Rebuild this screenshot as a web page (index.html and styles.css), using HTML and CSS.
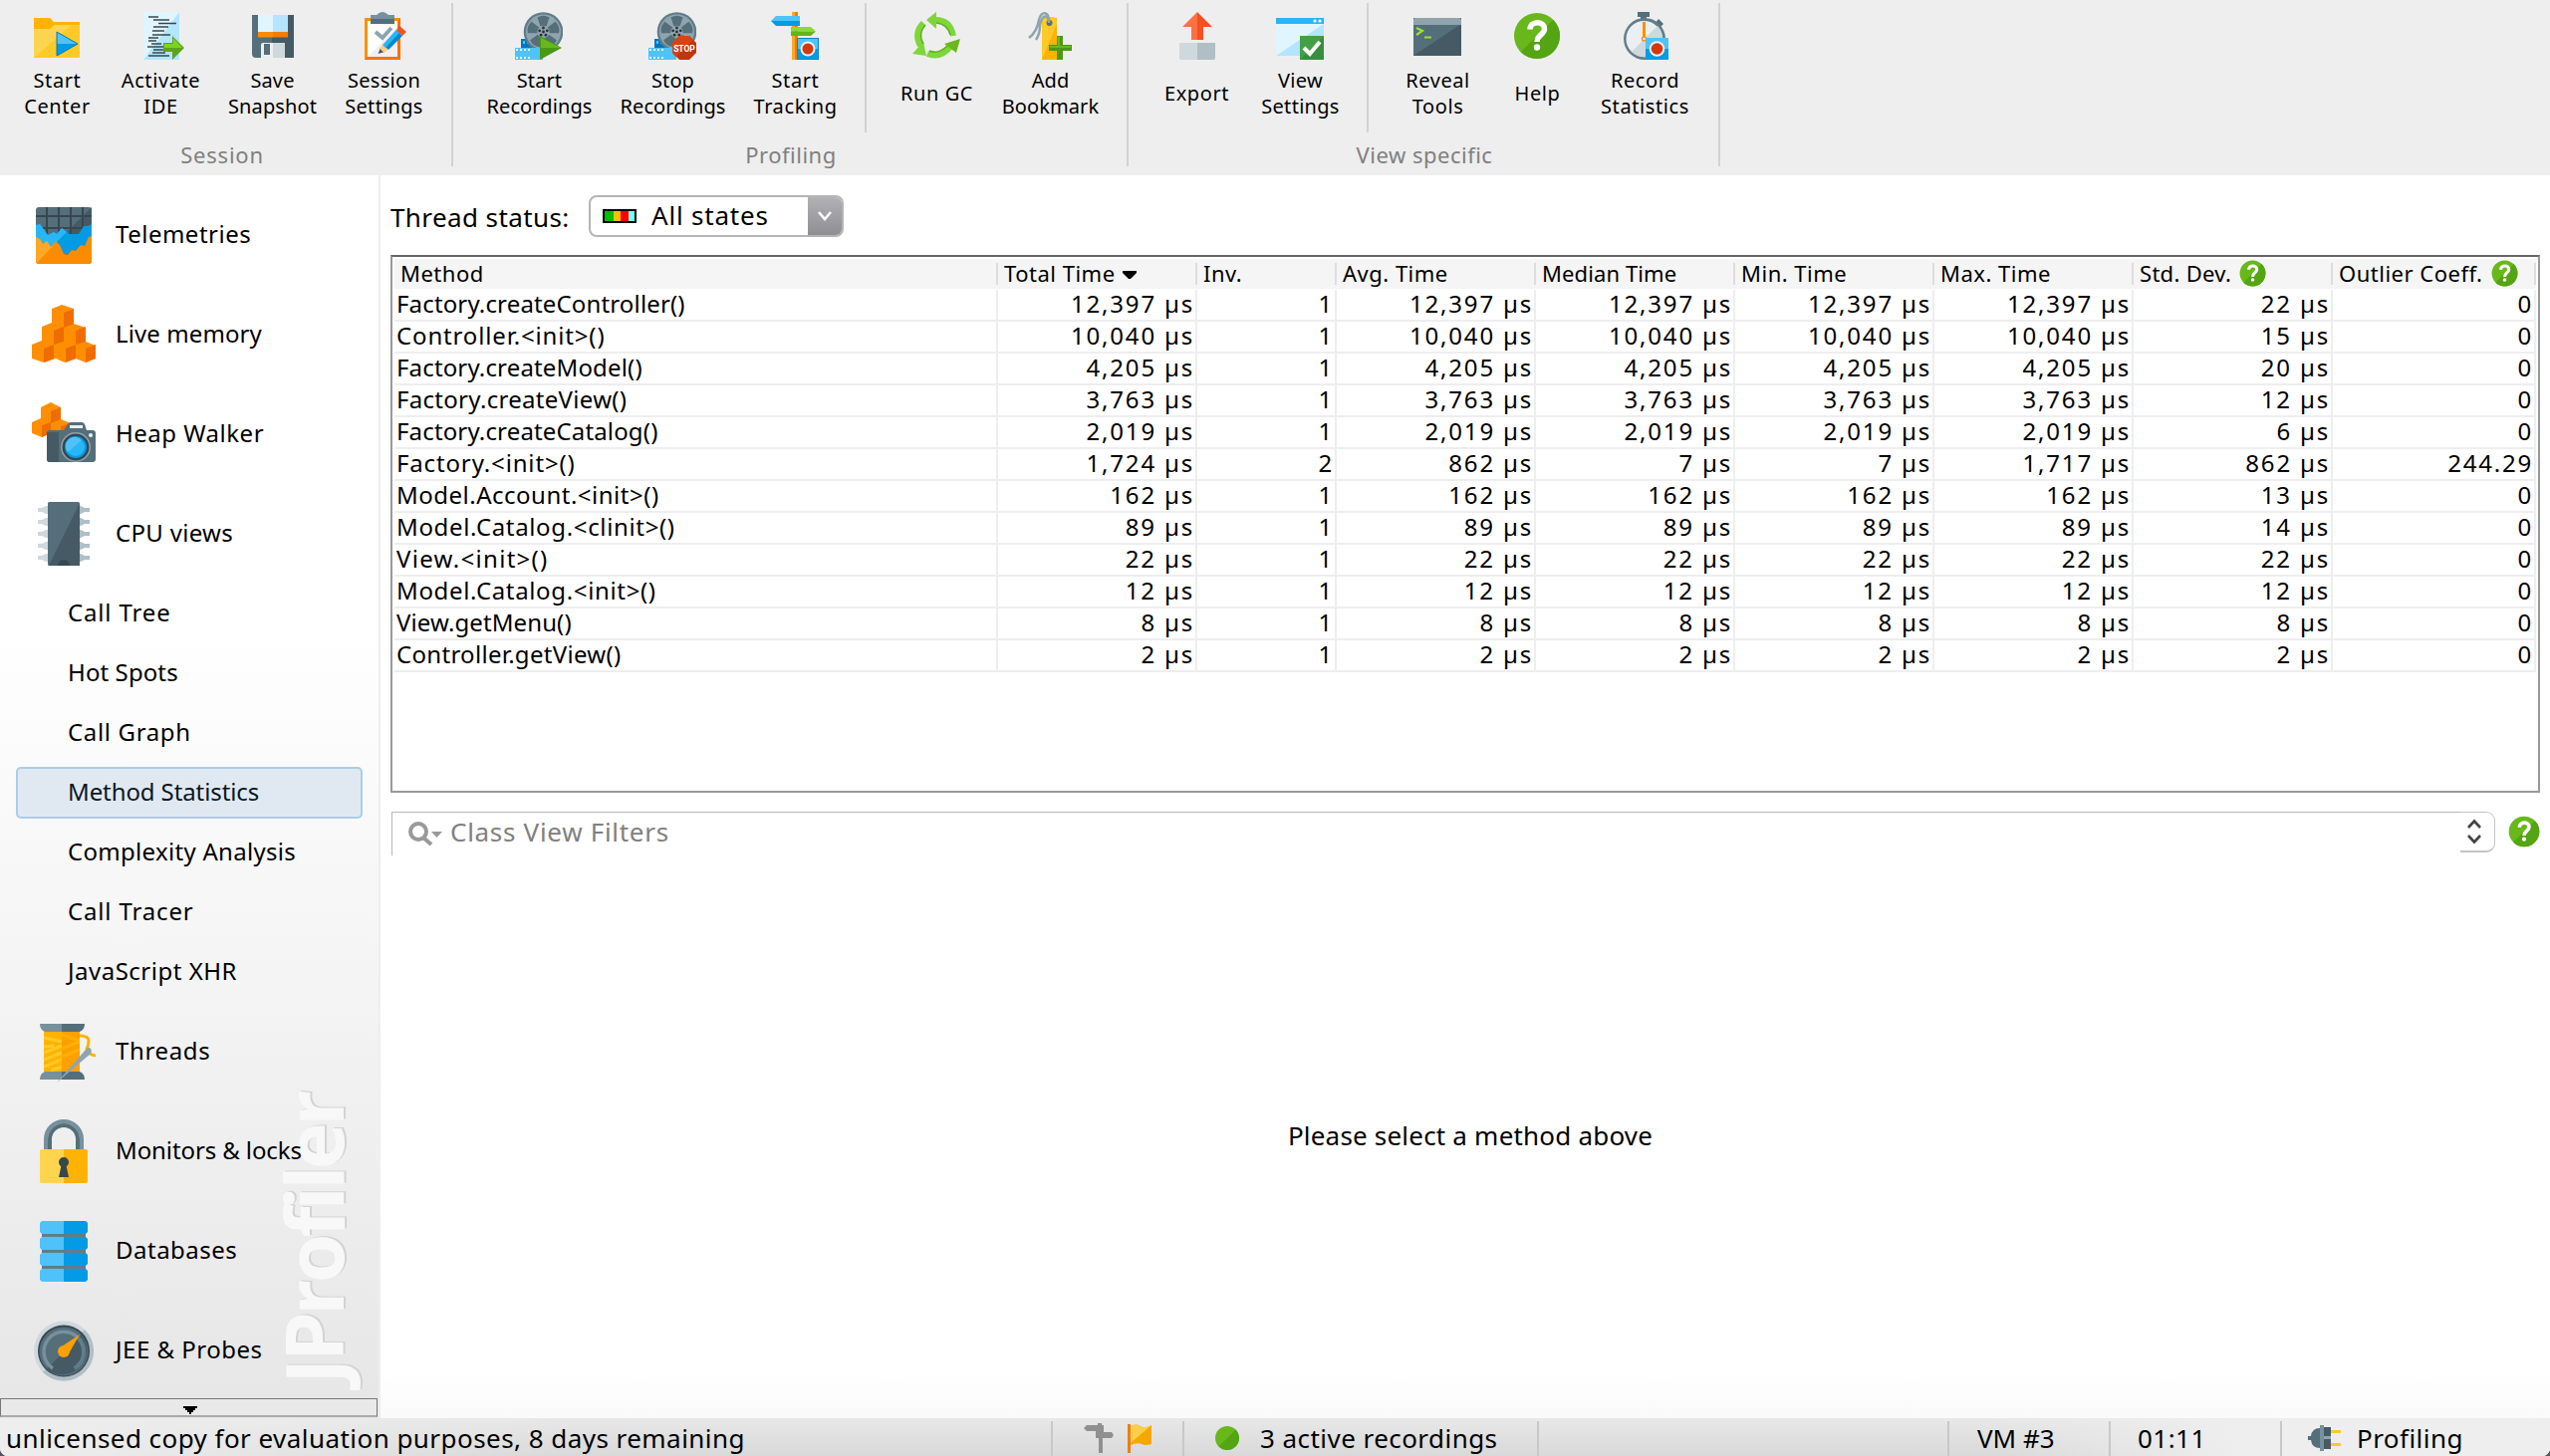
FILE: index.html
```html
<!DOCTYPE html>
<html lang="en">
<head>
<meta charset="utf-8">
<title>JProfiler</title>
<link rel="stylesheet" href="styles.css">
</head>
<body>
<svg class="defs" width="0" height="0">
  <symbol id="help" viewBox="0 0 48 48">
    <circle cx="24" cy="24" r="23" fill="#68b81b"/>
    <path d="M40.300 7.700A23 23 0 0 1 7.700 40.300z" fill="#54a414"/>
    <path d="M17 17.500c0-9 14.500-9 14.500-.5 0 6-7.500 6-7.500 13" fill="none" stroke="#fff" stroke-width="5.500"/>
    <circle cx="24" cy="35.500" r="3.200" fill="#fff"/>
  </symbol>
  <symbol id="reel" viewBox="0 0 48 48">
    <path d="M6 27h18v14H6z" fill="#0277bd"/>
    <path d="M8 29h2v3H8zM12 29h2v3h-2z" fill="#4fc3f7"/>
    <circle cx="28.500" cy="20" r="19.800" fill="#607d8b"/>
    <circle cx="28.500" cy="20" r="17.500" fill="#90a4ae"/>
    <g fill="#546e7a">
      <path id="lobe" d="M22.500 5.500q6-3.500 12 0l-3 9q-3-1.500-6 0z"/>
      <use href="#lobe" transform="rotate(72 28.500 20)"/>
      <use href="#lobe" transform="rotate(144 28.500 20)"/>
      <use href="#lobe" transform="rotate(216 28.500 20)"/>
      <use href="#lobe" transform="rotate(288 28.500 20)"/>
    </g>
    <g fill="#263238"><circle cx="28.500" cy="20" r="1.400"/><circle cx="28.500" cy="16" r="1.400"/><circle cx="32.300" cy="18.800" r="1.400"/><circle cx="30.900" cy="23.200" r="1.400"/><circle cx="26.100" cy="23.200" r="1.400"/><circle cx="24.700" cy="18.800" r="1.400"/></g>
    <path d="M0 36h28v12H0z" fill="#4fc3f7"/>
    <path d="M1 38h15M1 46h15" stroke="#e1f5fe" stroke-width="2" stroke-dasharray="2 2"/>
  </symbol>
</svg>
<div class="app">
  <header class="toolbar">
    <section class="group session">
      <div class="buttons">
        <div class="btn w100"><svg viewBox="0 0 48 48"><path d="M1 6h16l4 4h26v36H1z" fill="#ffb300"/><path d="M1 17h16l5-4h25v33H1z" fill="#ffca28"/><path d="M1 17h16l5-4h17L1 46z" fill="#ffd54f"/><path d="M24 20v12h21z" fill="#4fc3f7"/><path d="M24 32h21L24 44z" fill="#039be5"/><path d="M24 20v24l21-12z" fill="none" stroke="#0277bd" stroke-width="1"/></svg><span>Start<br>Center</span></div>
        <div class="btn w108"><svg viewBox="0 0 48 48"><path d="M7 0h36v48H7z" fill="#b3e5fc"/><path d="M7 0h36L7 48z" fill="#e1f5fe"/><path d="M12 5h10M17 8h16M22 11.500h18M17 15h15M16 19h12M16 23h18M12 26h10M12 29h8M15 32h10M11 35h16M17 38h12M16 41h13M12 44h21" stroke="#37474f" stroke-width="1.500"/><path d="M27 31h9v-7l12 12-12 12v-8h-9z" fill="#5fa31c"/><path d="M28 32h9v-6l9 10H28z" fill="#7ed321"/></svg><span>Activate<br>IDE</span></div>
        <div class="btn w116"><svg viewBox="0 0 48 48"><path d="M4 3h20v43H8q-4 0-4-4z" fill="#546e7a"/><path d="M24 3h22v43H24z" fill="#455a64"/><path d="M10 3h15v17H10z" fill="#e1f5fe"/><path d="M25 3h15v17H25z" fill="#b3e5fc"/><path d="M10 20h15v5.500H10z" fill="#fb8c00"/><path d="M25 20h15v5.500H25z" fill="#f57c00"/><path d="M13 46V33q0-2 2-2h10v15z" fill="#eceff1"/><path d="M25 31h12v15H25z" fill="#cfd8dc"/><path d="M16 32h6v11h-6z" fill="#546e7a"/></svg><span class="t1">Save<br>Snapshot</span></div>
        <div class="btn w108"><svg viewBox="0 0 48 48"><path d="M5 6h36v42H5z" fill="#ff8f00"/><path d="M41 6v42H5z" fill="#ff6f00"/><path d="M8 9h30v36H8z" fill="#fff"/><path d="M8 45L38 15v30z" fill="#f0f0f0"/><path d="M11 3h6q6-6 12 0h6v9H11z" fill="#78909c"/><path d="M11 7h24v5H11z" fill="#546e7a"/><path d="M16 20l7 6 9-10" fill="none" stroke="#90a4ae" stroke-width="4"/><path d="M21 36l-2.500 6 7-2z" fill="#455a64"/><path d="M23 32l6 6-5 2.500-3.500-3.500z" fill="#ffcc80"/><path d="M23.500 33L37 18l6 6-14 14z" fill="#0288d1"/><path d="M23.500 33L37 18l3 3-14 15z" fill="#29b6f6"/><path d="M37 18l3-4 7 6-4 4z" fill="#f4511e"/></svg><span class="t3">Session<br>Settings</span></div>
      </div>
      <h2>Session</h2>
    </section>
    <section class="group profiling">
      <div class="buttons">
        <div class="btn w134"><svg viewBox="0 0 48 48"><use href="#reel"/><path d="M25 24v24l22-12z" fill="#4a9914"/><path d="M26 26v10h20z" fill="#68b81b"/></svg><span class="t1">Start<br>Recordings</span></div>
        <div class="btn w134"><svg viewBox="0 0 48 48"><use href="#reel"/><path d="M31 24h10l7 7v10l-7 7H31l-7-7V31z" fill="#bf360c"/><path d="M31 24h10l4 4-18 17-3-4V31z" fill="#d84315"/><text x="36" y="39.500" class="stop">STOP</text></svg><span class="t1">Stop<br>Recordings</span></div>
        <div class="btn w112"><svg viewBox="0 0 48 48"><path d="M21 0h3v48h-3z" fill="#ffa726"/><path d="M24 0h3v48h-3z" fill="#f57c00"/><path d="M0 9l5-5h24v5z" fill="#4fc3f7"/><path d="M0 9h29v5H5z" fill="#039be5"/><path d="M20 15h20l5 4.500H20z" fill="#8bd932"/><path d="M20 19.500h25L40 24H20z" fill="#64b41b"/><path d="M26 26h22v22H26z" fill="#0288d1"/><path d="M27 27h20v10H27z" fill="#4fc3f7"/><path d="M27 37h20v10H27z" fill="#039be5"/><circle cx="37" cy="37" r="7.500" fill="#eceff1"/><circle cx="37" cy="37" r="5.500" fill="#d3380d"/></svg><span>Start<br>Tracking</span></div>
        <div class="rule"></div>
        <div class="btn w110"><svg viewBox="0 0 48 48"><g fill="none" stroke="#7ed63a" stroke-width="6"><path d="M23 8Q38 8 41 24"/><path d="M38 35Q28 47 15 42"/><path d="M8 34Q1 21 11 11"/></g><path d="M24 0v17l-10-9z" fill="#7ed63a"/><path d="M48 27l-4 14-12-9z" fill="#68b81b"/><path d="M0 42l14 2-3-14z" fill="#7ed63a"/><path d="M24 11q11 1 14 12M35 34q-9 9-18 5M11 32Q5 22 13 13" fill="none" stroke="#5dad18" stroke-width="1.500"/></svg><span>Run GC</span></div>
        <div class="btn w118"><svg viewBox="0 0 48 48"><path d="M16 6h15v42H16z" fill="#ffb300"/><path d="M16 9q1-4 4-4h7q3 0 4 4v3L16 48z" fill="#ffca28"/><circle cx="23.500" cy="11" r="3" fill="#546e7a"/><path d="M23 11C24-1 15-2 13 8q-2 12-10 18M23 10C22 2 16 2 14 14q0 8-4 14" fill="none" stroke="#90a4ae" stroke-width="2.500"/><path d="M31 24h6v9h9v6h-9v9h-6v-9h-8v-6h8z" fill="#4a9914"/><path d="M32 25h2v9h11v2H24v-2h8z" fill="#68b81b"/></svg><span class="t1">Add<br>Bookmark</span></div>
      </div>
      <h2>Profiling</h2>
    </section>
    <section class="group view">
      <div class="buttons">
        <div class="btn w102"><svg viewBox="0 0 48 48"><path d="M25 0v28h-6V15h-9z" fill="#ff7043"/><path d="M25 0v28h6V15h9z" fill="#f4511e"/><path d="M7 31h18v17H9q-2 0-2-2z" fill="#cfd8dc"/><path d="M25 31h18v15q0 2-2 2H25z" fill="#b0bec5"/></svg><span>Export</span></div>
        <div class="btn w106"><svg viewBox="0 0 48 48"><path d="M0 6h48v38H0z" fill="#b3e5fc"/><path d="M0 12h48L0 44z" fill="#e1f5fe"/><path d="M0 6h48v6H0z" fill="#29b6f6"/><circle cx="39" cy="9" r="1.600" fill="#fff"/><circle cx="44" cy="9" r="1.600" fill="#fff"/><path d="M24 24h24v24H24z" fill="#43a047"/><path d="M48 24v24H24z" fill="#388e3c"/><path d="M28 36l6 6 10-12" fill="none" stroke="#fff" stroke-width="4"/></svg><span class="t3">View<br>Settings</span></div>
        <div class="rule"></div>
        <div class="btn w108"><svg viewBox="0 0 48 48"><path d="M0 6h48v38H0z" fill="#455a64"/><path d="M0 12h48L0 44z" fill="#546e7a"/><path d="M2 6h44q2 0 2 2v5H0V8q0-2 2-2z" fill="#90a4ae"/><path d="M3 16l6 3-6 4M11 25.500h7" fill="none" stroke="#9be22d" stroke-width="2.200"/></svg><span>Reveal<br>Tools</span></div>
        <div class="btn w92"><svg viewBox="0 0 48 48"><use href="#help"/></svg><span>Help</span></div>
        <div class="btn w124"><svg viewBox="0 0 48 48"><path d="M17 0h12v5h-3v3h-6V5h-3z" fill="#546e7a"/><path d="M35 11l3-4 5 5-4 4z" fill="#546e7a"/><circle cx="24" cy="27" r="21" fill="#607d8b"/><circle cx="23.500" cy="27" r="18" fill="#eceff1"/><path d="M37 14A18 18 0 0 1 11 40z" fill="#cfd8dc"/><path d="M23.500 10v15" stroke="#ff8f00" stroke-width="3"/><circle cx="23.500" cy="27" r="2" fill="#fff" stroke="#ff8f00" stroke-width="1.500"/><path d="M25 26h23v22H25z" fill="#039be5"/><path d="M25 26h23v11H25z" fill="#4fc3f7"/><circle cx="36.500" cy="37" r="7.800" fill="#eceff1"/><circle cx="36.500" cy="37" r="5.800" fill="#d3380d"/></svg><span>Record<br>Statistics</span></div>
      </div>
      <h2>View specific</h2>
    </section>
  </header>
  <div class="body">
    <nav class="sidebar">
      <div class="watermark">JProfiler</div>
      <div class="item"><svg viewBox="0 0 64 64"><rect x="4" y="4" width="56" height="57" rx="3" fill="#546e7a"/><path d="M60 4v40H20z" fill="#455a64"/><path d="M15 4v28M27 4v28M39 4v28M51 4v28M4 13h56M4 25h56" stroke="#37474f" stroke-width="2"/><path d="M4 22l4-1 8 11 6-3 3 2 5-6 8 6h9l5-8h4l4-2v30H4z" fill="#039be5"/><path d="M4 22l4-1 8 11 6-3 3 2 5-6 5 4-18 18H4z" fill="#29b6f6"/><path d="M4 34l4 2 3 5 4-3 4 6 5-6 4 4 4 9 4 1 4-5 4 1 5-6 4 1 4-9 3-1v25q0 3-3 3H7q-3 0-3-3z" fill="#fb8c00"/><path d="M4 34l4 2 3 5 4-3 4 6 3-2L5 60l-1-2z" fill="#ffa726"/></svg><span>Telemetries</span></div>
      <div class="item"><svg viewBox="0 0 64 64"><path d="M30 2l12 4v15l12 4v14l10 4v13l-10 4-10-4-11 4-9-4-12 4-12-4V42l10-4V24l10-4V6z" fill="#ff8f00"/><path d="M42 6v15l-10 4V10zM32 24v15l-10 3V28zM54 24v15l-10 3V28zM22 42v14l-10 4V46zM44 42v14l-10 4V46zM64 42v14l-10 4V46z" fill="#ef6c00"/></svg><span class="t1">Live memory</span></div>
      <div class="item"><svg viewBox="0 0 64 64"><path d="M19 0l10 5v12l10 4v10H19l-9 4-10-4V20l9-4V5z" fill="#ff8f00"/><path d="M29 5v12l-10 4V9zM19 20v11l-9 4V23zM38 21l-9 3v7h9z" fill="#ef6c00"/><path d="M15 31q0-3 3-3h14l4-6q1-2 3-2h11q2 0 3 2l2 6h6q3 0 3 3v26q0 3-3 3H18q-3 0-3-3z" fill="#546e7a"/><path d="M15 30h12v30h-9q-3 0-3-3z" fill="#455a64"/><path d="M38 23h13v3H38z" fill="#eceff1"/><circle cx="44" cy="45" r="15" fill="#90a4ae"/><circle cx="44" cy="45" r="13.500" fill="#37474f"/><circle cx="44" cy="45" r="11" fill="#039be5"/><circle cx="44" cy="45" r="9" fill="#29b6f6"/><path d="M36 50a9 9 0 0 1 14-12z" fill="#4fc3f7"/><circle cx="59" cy="33" r="2" fill="#eceff1"/></svg><span>Heap Walker</span></div>
      <div class="item"><svg viewBox="0 0 64 64"><path id="pinl" d="M6 6h4l4-2h3v8h-3l-4-2H6z" fill="#cfd8dc"/><use href="#pinl" y="12"/><use href="#pinl" y="24"/><use href="#pinl" y="36"/><use href="#pinl" y="48"/><path id="pinr" d="M58 6h-5l-4-2h-3v8h3l4-2h5z" fill="#b0bec5"/><use href="#pinr" y="12"/><use href="#pinr" y="24"/><use href="#pinr" y="36"/><use href="#pinr" y="48"/><rect x="16" width="32" height="64" rx="1.500" fill="#546e7a"/><path d="M48 1v63H17z" fill="#455a64"/><path d="M26 64a6 6 0 0 1 12 0z" fill="#37474f"/></svg><span class="t3">CPU views</span></div>
      <div class="sub"><span class="t9">Call Tree</span></div>
      <div class="sub"><span class="t1">Hot Spots</span></div>
      <div class="sub"><span class="t6">Call Graph</span></div>
      <div class="sub selected"><span class="t0">Method Statistics</span></div>
      <div class="sub"><span class="t3">Complexity Analysis</span></div>
      <div class="sub"><span class="t9">Call Tracer</span></div>
      <div class="sub"><span class="t5">JavaScript XHR</span></div>
      <div class="item"><svg viewBox="0 0 64 64"><path d="M12 12h18v40H12z" fill="#ffb300"/><path d="M30 12h18v40H30z" fill="#ffa000"/><path d="M12 18l18 4M12 27l10-1M12 33l18-7M12 40l18-7M12 47l18-7M19 51l11-4" stroke="#ffca28" stroke-width="3"/><path d="M30 15l18 6M30 29l18-7M30 37l18-7" stroke="#ffb300" stroke-width="2.500"/><path d="M8 4h22v8H13q-5-2-5-8zM8 60h22v-8H13q-5 2-5 8z" fill="#78909c"/><path d="M30 4h23q0 6-5 8H30zM30 60h23q0-6-5-8H30z" fill="#546e7a"/><path d="M48 16q9 0 9 5t-2 8q1 6 9 7" fill="none" stroke="#ffb300" stroke-width="3"/><path d="M58 28q3 2 1 6L25 63l29-33q2-3 4-2z" fill="#90a4ae"/></svg><span class="t6">Threads</span></div>
      <div class="item"><svg viewBox="0 0 64 64"><path d="M14 32V20a18 18 0 0 1 36 0v12" fill="none" stroke="#78909c" stroke-width="4"/><path d="M18 32V20a14 14 0 0 1 28 0v12" fill="none" stroke="#546e7a" stroke-width="4"/><path d="M8 32q0-2 2-2h22v34H10q-2 0-2-2z" fill="#ffd54f"/><path d="M32 30h22q2 0 2 2v30q0 2-2 2H32z" fill="#ffb300"/><circle cx="32" cy="43" r="5" fill="#37474f"/><path d="M30 44h4l3 14H27z" fill="#37474f"/></svg><span class="t0">Monitors &amp; locks</span></div>
      <div class="item"><svg viewBox="0 0 64 64"><path d="M10 14h44v36H10z" fill="#607d8b"/><g fill="#4fc3f7"><path id="dbl" d="M32 2H10l-2 2v9l2 2h22z"/><use href="#dbl" y="16"/><use href="#dbl" y="32"/><use href="#dbl" y="48"/></g><g fill="#039be5"><path id="dbr" d="M32 2h22l2 2v9l-2 2H32z"/><use href="#dbr" y="16"/><use href="#dbr" y="32"/><use href="#dbr" y="48"/></g></svg><span>Databases</span></div>
      <div class="item"><svg viewBox="0 0 64 64"><circle cx="32" cy="32.500" r="30" fill="#cfd8dc"/><path d="M53 11A30 30 0 0 1 11 54z" fill="#b0bec5"/><circle cx="32" cy="32.500" r="26" fill="#37474f"/><circle cx="32" cy="33" r="24.500" fill="#546e7a"/><path d="M49.500 16A24.500 24.500 0 0 1 15 50.500z" fill="#455a64"/><path d="M21 50a20 20 0 1 1 22 0" fill="none" stroke="#78909c" stroke-width="3.500"/><path d="M46 18.500A20 20 0 0 1 43 50" fill="none" stroke="#607d8b" stroke-width="3.500"/><circle cx="32" cy="33" r="6" fill="#ffa000"/><path d="M27 30l21-14-12 21z" fill="#ffa000"/></svg><span>JEE &amp; Probes</span></div>
      <div class="scroller"><svg viewBox="0 0 14 8" width="14" height="8"><path d="M0 0h14v2h-2v2h-2v2H8v2H6V6H4V4H2V2H0z"/></svg></div>
    </nav>
    <main class="main">
      <div class="status-row">
        <label>Thread status:</label>
        <div class="combo">
          <span class="states"><i class="run"></i><i class="wait"></i><i class="block"></i><i class="io"></i></span>
          <span class="value">All states</span>
          <span class="arrow"><svg viewBox="0 0 16 12" width="16" height="12"><path d="M2 2l6 7 6-7" fill="none" stroke="#fff" stroke-width="2.500"/></svg></span>
        </div>
      </div>
      <div class="table">
        <div class="row head"><b>Method</b><b>Total Time<svg class="sort" viewBox="0 0 14 8"><path d="M0 0h14v2L8 8H6L0 2z"/></svg></b><b>Inv.</b><b>Avg. Time</b><b class="t1">Median Time</b><b>Min. Time</b><b>Max. Time</b><b class="t3">Std. Dev.<svg class="q"><use href="#help"/></svg></b><b>Outlier Coeff.<svg class="q"><use href="#help"/></svg></b></div>
        <div class="row"><span>Factory.createController()</span><i>12,397 µs</i><i>1</i><i>12,397 µs</i><i>12,397 µs</i><i>12,397 µs</i><i>12,397 µs</i><i>22 µs</i><i>0</i></div>
        <div class="row"><span class="t9">Controller.&lt;init&gt;()</span><i>10,040 µs</i><i>1</i><i>10,040 µs</i><i>10,040 µs</i><i>10,040 µs</i><i>10,040 µs</i><i>15 µs</i><i>0</i></div>
        <div class="row"><span>Factory.createModel()</span><i>4,205 µs</i><i>1</i><i>4,205 µs</i><i>4,205 µs</i><i>4,205 µs</i><i>4,205 µs</i><i>20 µs</i><i>0</i></div>
        <div class="row"><span class="t3">Factory.createView()</span><i>3,763 µs</i><i>1</i><i>3,763 µs</i><i>3,763 µs</i><i>3,763 µs</i><i>3,763 µs</i><i>12 µs</i><i>0</i></div>
        <div class="row"><span>Factory.createCatalog()</span><i>2,019 µs</i><i>1</i><i>2,019 µs</i><i>2,019 µs</i><i>2,019 µs</i><i>2,019 µs</i><i>6 µs</i><i>0</i></div>
        <div class="row"><span class="t9">Factory.&lt;init&gt;()</span><i>1,724 µs</i><i>2</i><i>862 µs</i><i>7 µs</i><i>7 µs</i><i>1,717 µs</i><i>862 µs</i><i>244.29</i></div>
        <div class="row"><span class="t5">Model.Account.&lt;init&gt;()</span><i>162 µs</i><i>1</i><i>162 µs</i><i>162 µs</i><i>162 µs</i><i>162 µs</i><i>13 µs</i><i>0</i></div>
        <div class="row"><span class="t6">Model.Catalog.&lt;clinit&gt;()</span><i>89 µs</i><i>1</i><i>89 µs</i><i>89 µs</i><i>89 µs</i><i>89 µs</i><i>14 µs</i><i>0</i></div>
        <div class="row"><span class="t12">View.&lt;init&gt;()</span><i>22 µs</i><i>1</i><i>22 µs</i><i>22 µs</i><i>22 µs</i><i>22 µs</i><i>22 µs</i><i>0</i></div>
        <div class="row"><span class="t6">Model.Catalog.&lt;init&gt;()</span><i>12 µs</i><i>1</i><i>12 µs</i><i>12 µs</i><i>12 µs</i><i>12 µs</i><i>12 µs</i><i>0</i></div>
        <div class="row"><span class="t1">View.getMenu()</span><i>8 µs</i><i>1</i><i>8 µs</i><i>8 µs</i><i>8 µs</i><i>8 µs</i><i>8 µs</i><i>0</i></div>
        <div class="row"><span class="t3">Controller.getView()</span><i>2 µs</i><i>1</i><i>2 µs</i><i>2 µs</i><i>2 µs</i><i>2 µs</i><i>2 µs</i><i>0</i></div>
      </div>
      <div class="filter-row">
        <div class="filter">
          <svg viewBox="0 0 34 26" width="34" height="26"><circle cx="10" cy="10" r="8" fill="none" stroke="#999" stroke-width="4"/><path d="M15 16l8 7" stroke="#999" stroke-width="4"/><path d="M23 10h11l-5.500 6z" fill="#999"/></svg>
          <span>Class View Filters</span>
        </div>
        <div class="stepper"><svg viewBox="0 0 14 26" width="14" height="26"><path d="M1 9l6-6.500L13 9M1 17l6 6.500 6-6.500" fill="none" stroke="#444" stroke-width="2.600"/></svg></div>
        <svg class="help"><use href="#help"/></svg>
      </div>
      <div class="placeholder">Please select a method above</div>
    </main>
  </div>
  <footer class="statusbar">
    <div class="cell license">unlicensed copy for evaluation purposes, 8 days remaining</div>
    <div class="cell flags"><svg viewBox="0 0 30 30" width="30" height="30"><path d="M0 5l3-3h11V0h4v2h2v7h8l2 3-2 3h-9v15h-4V15h-3V8H3z" fill="#909090"/></svg><svg viewBox="0 0 24 30" width="24" height="30"><path d="M3 3q6-3 10 0t11-1v19q-6 2-10 0t-11 1z" fill="#f7a800"/><path d="M3 3q6-3 10 0t11-1L3 20z" fill="#f9ce4a"/><path d="M0 1h3v29H0z" fill="#ef7d10"/></svg></div>
    <div class="cell rec"><svg viewBox="0 0 24 24" width="24" height="24"><circle cx="12" cy="12" r="12" fill="#68b81b"/><path d="M20.500 3.500a12 12 0 0 1-17 17z" fill="#54a414"/></svg><span>3 active recordings</span></div>
    <div class="cell grow"></div>
    <div class="cell vm">VM #3</div>
    <div class="cell time">01:11</div>
    <div class="cell mode"><svg viewBox="0 0 33 26" width="33" height="26"><path d="M0 11h3Q4 3 12 3v20Q4 23 3 15H0z" fill="#546e7a"/><path d="M12 0h4v26h-4z" fill="#78909c"/><path d="M16 2h7v22h-7z" fill="#455a64"/><path d="M16 11h7v3h-7z" fill="#90a4ae"/><path d="M23 5h10v3H23zM23 18h10v3H23z" fill="#ffca28"/></svg><span>Profiling</span></div>
  </footer>
</div>
</body>
</html>
```
FILE: styles.css
```css
* { box-sizing: border-box; }
body { margin: 0; background: #555; font-family: "Noto Sans", "Open Sans", sans-serif; color: #000; }
.defs { position: absolute; }
.app { width: 2560px; height: 1462px; display: flex; flex-direction: column; background: #fff; border-radius: 0 0 8px 8px; overflow: hidden; white-space: nowrap; }

/* Toolbar */
.toolbar { height: 176px; background: #eee; display: flex; flex: none; }
.group { height: 164px; margin-top: 3px; border-right: 2px solid #d2d2d2; padding-top: 9px; }
.session { width: 455px; padding-left: 7px; }
.profiling { width: 678px; padding-left: 19px; }
.view { width: 594px; padding-left: 17px; }
.buttons { display: flex; height: 121px; }
.btn { display: flex; flex-direction: column; align-items: center; font-size: 20px; line-height: 26px; letter-spacing: .6px; text-align: center; }
.btn svg { width: 48px; height: 48px; flex: none; overflow: visible; }
.btn span { height: 52px; margin: 8px 0 0 1px; display: flex; align-items: center; }
.stop { font: bold 8.500px "Roboto", sans-serif; letter-spacing: 0; text-anchor: middle; fill: #fff; }
.w92 { width: 92px; } .w100 { width: 100px; } .w102 { width: 102px; } .w106 { width: 106px; } .w108 { width: 108px; }
.w110 { width: 110px; } .w112 { width: 112px; } .w116 { width: 116px; } .w118 { width: 118px; } .w124 { width: 124px; } .w134 { width: 134px; }
.rule { width: 2px; background: #d2d2d2; margin: -9px 15px 0 14px; }
.group h2 { margin: 8px 0 0; font-size: 22px; line-height: 28px; font-weight: 400; letter-spacing: .5px; color: #808080; text-align: center; }
.session h2 { padding-right: 14px; letter-spacing: .8px; }
.profiling h2 { padding-right: 17px; }
.view h2 { padding-right: 15px; }

/* Body */
.body { flex: 1; display: flex; min-height: 0; }
.sidebar { position: relative; width: 382px; height: 1248px; border-right: 2px solid #eee; padding-top: 10px; background: linear-gradient(#fff 36%, #f4f4f4 65%, #e6e6e6 100%); overflow: hidden; }
.item { position: relative; height: 100px; padding-left: 32px; display: flex; align-items: center; gap: 20px; font-size: 24px; letter-spacing: .5px; }
.item svg { width: 64px; height: 64px; flex: none; }
.item span, .sub span { padding-bottom: 3px; }
.sub { position: relative; height: 60px; padding-left: 68px; display: flex; align-items: center; font-size: 24px; }
.selected { height: 52px; margin: 4px 16px; padding-left: 50px; border: 2px solid #abcde6; border-radius: 5px; background: #e0e9f2; color: #0c161f; }
.watermark { position: absolute; left: 264px; top: 908px; width: 100px; height: 306px; writing-mode: vertical-rl; transform: rotate(180deg); font: bold 80px/100px "Open Sans", sans-serif; letter-spacing: -3.800px; color: #f8f8f8; text-shadow: 1px 2px 0 #d3d3d3; }
.scroller { position: absolute; left: 0; top: 1228px; width: 379px; height: 19px; border: 1px solid #777; border-bottom: 2px solid #aaa; background: #e9e9e9; display: flex; align-items: center; justify-content: center; padding: 5px 0 0 3px; }

/* Main panel */
.main { flex: 1; padding-left: 10px; display: flex; flex-direction: column; background: linear-gradient(#fff 96%, #fafafa); }
.status-row { display: flex; margin-top: 20px; height: 60px; }
.status-row label { font-size: 26px; line-height: 44px; width: 199px; letter-spacing: .4px; }
.combo { width: 256px; height: 42px; border: 2px solid #b5b5b5; border-radius: 8px; display: flex; align-items: center; overflow: hidden; padding-left: 12px; }
.states { display: flex; width: 34px; height: 14px; border: 2px solid #000; }
.states i { width: 8px; } .run { background: #00c000; } .wait { background: #ffc000; } .block { background: red; } .states .io { width: 6px; background: #7ff; }
.states .run { width: 9px; }
.value { margin-left: 15px; flex: 1; padding-bottom: 2px; font-size: 26px; letter-spacing: .8px; }
.arrow { width: 34px; height: 42px; background: linear-gradient(#b4b3b7, #8d8c90); display: flex; align-items: center; justify-content: center; }
.table { width: 2158px; height: 540px; border: 2px solid #999; border-top-color: #666; padding: 2px; }
.row { display: grid; grid-template-columns: 606px 200px 140px repeat(5, 200px) 204px; height: 32px; border-bottom: 2px solid #eee; }
.row > * { font-style: normal; font-weight: 400; font-size: 24px; line-height: 28px; border-right: 2px solid #eee; height: 30px; }
.row span { padding-left: 2px; letter-spacing: .15px; }
.row i { text-align: right; padding-right: 1px; letter-spacing: 1.800px; }
.row.head { height: 31px; border-bottom: 1px solid #fff; background: #f5f5f5; padding: 4px 0; }
.head b { font-size: 22px; line-height: 20px; height: 22px; padding: 0 0 2px 6px; letter-spacing: .5px; display: flex; align-items: center; border-color: #ddd; }
.head .sort { width: 14px; height: 8px; margin-left: 7px; margin-top: 3px; }
.head .q { width: 27px; height: 27px; margin-left: 8px; }
.filter-row { display: flex; height: 44px; margin: 19px 10px 0 1px; }
.filter { width: 2077px; border: solid #b8b8b8; border-width: 1px 0 0 1px; display: flex; align-items: center; padding-left: 16px; }
.filter span { margin-left: 8px; padding-bottom: 5px; font-size: 26px; letter-spacing: .7px; color: #808080; }
.stepper { width: 35px; height: 41px; border: solid #c4c4c4; border-width: 1px 1px 2px 0; border-radius: 0 9px 9px 0; display: flex; align-items: center; justify-content: center; padding-right: 6px; }
.help { width: 32px; height: 32px; margin: 4px 0 0 13px; }
.placeholder { flex: 1; display: flex; align-items: center; justify-content: center; font-size: 26px; letter-spacing: .2px; padding: 0 0 4px 0; }

/* Status bar */
.statusbar { height: 38px; display: flex; padding-top: 3px; background: linear-gradient(90deg, #eee 0, transparent 22%, transparent 78%, #eee 88%), linear-gradient(#e8e8e8, #d9d9d9); font-size: 26px; letter-spacing: .45px; }
.cell { border-right: 2px solid #c8c8c8; display: flex; align-items: center; line-height: 34px; padding-bottom: 1px; }
.license { width: 1057px; padding-left: 6px; }
.flags { width: 132px; padding-left: 31px; gap: 14px; }
.rec { width: 356px; padding-left: 31px; gap: 21px; }
.grow { width: 412px; }
.vm { width: 162px; padding-left: 28px; letter-spacing: 0; }
.time { width: 172px; padding-left: 27px; }
.mode { flex: 1; border: 0; padding-left: 26px; gap: 16px; }

/* Letter-spacing steps */
.btn .t1, .item .t1, .sub .t1, .row .t1 { letter-spacing: .1px; }
.item .t0, .sub .t0 { letter-spacing: -.1px; }
.btn .t3, .item .t3, .sub .t3, .row .t3 { letter-spacing: .3px; }
.sub .t5, .row .t5 { letter-spacing: .5px; }
.item .t6, .sub .t6, .row .t6 { letter-spacing: .65px; }
.sub .t9, .row .t9 { letter-spacing: .85px; }
.row .t12 { letter-spacing: 1.300px; }
```
